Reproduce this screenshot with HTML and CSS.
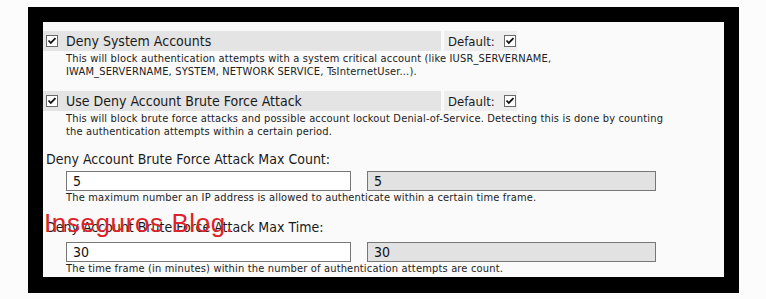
FILE: index.html
```html
<!DOCTYPE html>
<html>
<head>
<meta charset="utf-8">
<link rel="stylesheet" href="styles.css">
</head>
<body>
<div class="frame">
  <div class="panel">
    <div class="opt">
      <div class="opt-head">
        <div class="opt-bar">
          <svg class="cb" width="12" height="12" viewBox="0 0 12 12"><rect x="0.5" y="0.5" width="11" height="11" fill="#fff" stroke="#6a6a6a"/><path d="M2.5 5.5 L4.8 8 L9.5 3.2" fill="none" stroke="#111" stroke-width="1.8"/></svg>
          <span class="opt-title">Deny System Accounts</span>
        </div>
        <div class="opt-default">Default:
          <svg class="cb" width="12" height="12" viewBox="0 0 12 12"><rect x="0.5" y="0.5" width="11" height="11" fill="#fff" stroke="#6a6a6a"/><path d="M2.5 5.5 L4.8 8 L9.5 3.2" fill="none" stroke="#111" stroke-width="1.8"/></svg>
        </div>
      </div>
      <p class="desc">This will block authentication attempts with a system critical account (like IUSR_SERVERNAME,<br>IWAM_SERVERNAME, SYSTEM, NETWORK SERVICE, TsInternetUser...).</p>
    </div>
    <div class="opt">
      <div class="opt-head">
        <div class="opt-bar">
          <svg class="cb" width="12" height="12" viewBox="0 0 12 12"><rect x="0.5" y="0.5" width="11" height="11" fill="#fff" stroke="#6a6a6a"/><path d="M2.5 5.5 L4.8 8 L9.5 3.2" fill="none" stroke="#111" stroke-width="1.8"/></svg>
          <span class="opt-title">Use Deny Account Brute Force Attack</span>
        </div>
        <div class="opt-default">Default:
          <svg class="cb" width="12" height="12" viewBox="0 0 12 12"><rect x="0.5" y="0.5" width="11" height="11" fill="#fff" stroke="#6a6a6a"/><path d="M2.5 5.5 L4.8 8 L9.5 3.2" fill="none" stroke="#111" stroke-width="1.8"/></svg>
        </div>
      </div>
      <p class="desc">This will block brute force attacks and possible account lockout Denial-of-Service. Detecting this is done by counting<br>the authentication attempts within a certain period.</p>
    </div>
    <div class="field">
      <div class="field-label">Deny Account Brute Force Attack Max Count:</div>
      <div class="field-inputs">
        <input class="inp" type="text" value="5">
        <input class="inp inp-dis" type="text" value="5" disabled>
      </div>
      <p class="desc">The maximum number an IP address is allowed to authenticate within a certain time frame.</p>
    </div>
    <div class="field field-2">
      <div class="field-label">Deny Account Brute Force Attack Max Time:</div>
      <div class="field-inputs">
        <input class="inp" type="text" value="30">
        <input class="inp inp-dis" type="text" value="30" disabled>
      </div>
      <p class="desc">The time frame (in minutes) within the number of authentication attempts are count.</p>
    </div>
  </div>
  <div class="watermark">Inseguros Blog.</div>
</div>
</body>
</html>
```
FILE: styles.css
```css
html, body {
  margin: 0;
  padding: 0;
  background: #fcfcfc;
}
body {
  padding: 7px 0 0 28px;
  font-family: "DejaVu Sans Condensed", "DejaVu Sans", sans-serif;
  color: #1a1a1a;
}
.frame {
  position: relative;
  width: 681px;
  height: 255px;
  border: 15px solid #000;
  border-bottom-width: 16px;
  background: #fafafa;
  overflow: hidden;
}
.panel {
  padding-top: 9px;
}
.opt-head {
  display: flex;
  height: 20px;
}
.opt-bar {
  width: 398px;
  background: #e4e4e4;
  display: flex;
  align-items: center;
  padding-left: 3px;
  box-sizing: border-box;
}
.opt-bar .cb {
  margin-right: 8px;
}
.opt-title {
  font-size: 14px;
}
.opt-default {
  margin-left: 3px;
  width: 73px;
  background: #eeeeee;
  display: flex;
  align-items: center;
  padding-left: 4px;
  box-sizing: border-box;
  font-size: 13px;
}
.opt-default .cb {
  margin-left: 9px;
}
.cb {
  display: block;
  flex: none;
}
.desc {
  margin: 0;
  padding-left: 23px;
  font-size: 11px;
  letter-spacing: 0.17px;
  line-height: 13px;
  color: #222;
  white-space: nowrap;
}
.opt .desc {
  padding-top: 1px;
  margin-bottom: 13px;
}
.field-label {
  padding-left: 3px;
  font-size: 14px;
  line-height: 16px;
}
.field-inputs {
  display: flex;
  gap: 16px;
  padding-left: 23px;
  margin-top: 4px;
}
.inp {
  box-sizing: border-box;
  height: 20px;
  width: 285px;
  border: 1px solid #777;
  background: #fff;
  padding: 0 6px;
  font-family: inherit;
  font-size: 14px;
  color: #111;
  margin: 0;
}
.inp-dis {
  width: 289px;
  background: #e2e2e2;
}
.field-2 {
  margin-top: 15px;
}
.field-2 .field-inputs {
  margin-top: 7px;
}
.field-2 .desc {
  line-height: 14px;
}
.watermark {
  position: absolute;
  left: 1px;
  top: 186px;
  font-family: "Liberation Sans", Arial, sans-serif;
  font-size: 26px;
  color: #dc2329;
  line-height: 30px;
  letter-spacing: 0.6px;
}
```
